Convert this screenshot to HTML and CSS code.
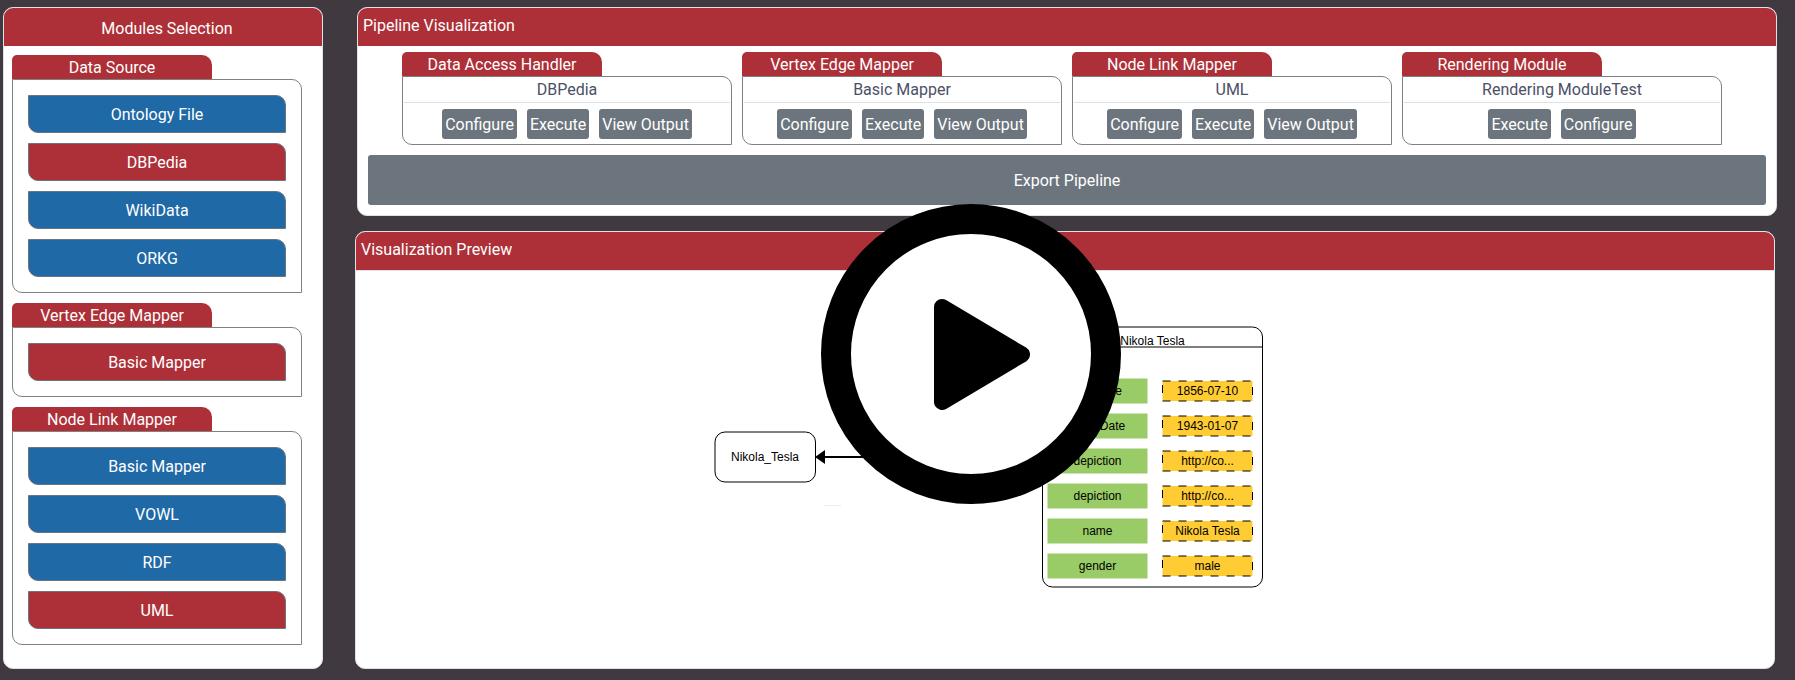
FILE: index.html
```html
<!DOCTYPE html>
<html lang="en">
<head>
<meta charset="utf-8">
<title>Visualization Pipeline</title>
<link rel="stylesheet" href="styles.css">
</head>
<body>
<div class="app">
  <aside class="panel modules">
    <h1 class="panel-header modules-title">Modules Selection</h1>
    <div class="module-groups">
      <section>
        <h2 class="tab">Data Source</h2>
        <div class="box module-list">
          <button class="module">Ontology File</button>
          <button class="module selected">DBPedia</button>
          <button class="module">WikiData</button>
          <button class="module">ORKG</button>
        </div>
      </section>
      <section>
        <h2 class="tab">Vertex Edge Mapper</h2>
        <div class="box module-list">
          <button class="module selected">Basic Mapper</button>
        </div>
      </section>
      <section>
        <h2 class="tab">Node Link Mapper</h2>
        <div class="box module-list">
          <button class="module">Basic Mapper</button>
          <button class="module">VOWL</button>
          <button class="module">RDF</button>
          <button class="module selected">UML</button>
        </div>
      </section>
    </div>
  </aside>

  <main class="content">
    <section class="panel pipeline">
      <h1 class="panel-header">Pipeline Visualization</h1>
      <div class="steps">
        <section class="step step-wide">
          <h2 class="tab">Data Access Handler</h2>
          <div class="box step-box">
            <div class="step-name">DBPedia</div>
            <div class="actions"><button class="action">Configure</button><button class="action">Execute</button><button class="action">View Output</button></div>
          </div>
        </section>
        <section class="step">
          <h2 class="tab">Vertex Edge Mapper</h2>
          <div class="box step-box">
            <div class="step-name">Basic Mapper</div>
            <div class="actions"><button class="action">Configure</button><button class="action">Execute</button><button class="action">View Output</button></div>
          </div>
        </section>
        <section class="step">
          <h2 class="tab">Node Link Mapper</h2>
          <div class="box step-box">
            <div class="step-name">UML</div>
            <div class="actions"><button class="action">Configure</button><button class="action">Execute</button><button class="action">View Output</button></div>
          </div>
        </section>
        <section class="step">
          <h2 class="tab">Rendering Module</h2>
          <div class="box step-box">
            <div class="step-name">Rendering ModuleTest</div>
            <div class="actions"><button class="action">Execute</button><button class="action">Configure</button></div>
          </div>
        </section>
      </div>
      <button class="export">Export Pipeline</button>
    </section>

    <section class="panel preview">
      <h1 class="panel-header">Visualization Preview</h1>
      <div class="canvas">
        <svg class="diagram" width="800" height="390" viewBox="665 271 800 390">
          <rect class="node" x="715" y="432" width="100.500" height="50" rx="10"/>
          <text x="765" y="461">Nikola_Tesla</text>
          <path class="edge" d="M824 457H1042"/>
          <path d="M815 457L825 450V464Z"/>
          <rect class="node" x="1042.5" y="327" width="220" height="260" rx="10"/>
          <path class="node" d="M1042.5 347H1262.5"/>
          <text x="1152.5" y="345">Nikola Tesla</text>
          <g class="keys">
            <rect x="1047.5" y="378.5" width="100" height="25"/>
            <rect x="1047.5" y="413.5" width="100" height="25"/>
            <rect x="1047.5" y="448.5" width="100" height="25"/>
            <rect x="1047.5" y="483.5" width="100" height="25"/>
            <rect x="1047.5" y="518.5" width="100" height="25"/>
            <rect x="1047.5" y="553.5" width="100" height="25"/>
          </g>
          <g class="values">
            <rect x="1162.5" y="381" width="90" height="20"/>
            <rect x="1162.5" y="416" width="90" height="20"/>
            <rect x="1162.5" y="451" width="90" height="20"/>
            <rect x="1162.5" y="486" width="90" height="20"/>
            <rect x="1162.5" y="521" width="90" height="20"/>
            <rect x="1162.5" y="556" width="90" height="20"/>
          </g>
          <text x="1097.5" y="395">birthDate</text><text x="1207.5" y="395">1856-07-10</text>
          <text x="1097.5" y="430">deathDate</text><text x="1207.5" y="430">1943-01-07</text>
          <text x="1097.5" y="465">depiction</text><text x="1207.5" y="465">http://co...</text>
          <text x="1097.5" y="500">depiction</text><text x="1207.5" y="500">http://co...</text>
          <text x="1097.5" y="535">name</text><text x="1207.5" y="535">Nikola Tesla</text>
          <text x="1097.5" y="570">gender</text><text x="1207.5" y="570">male</text>
          <path class="trace" d="M824 505.5H841"/>
        </svg>
      </div>
      <button class="play" aria-label="Play">
        <svg width="300" height="300" viewBox="0 0 300 300">
          <circle cx="150" cy="150" r="135" fill="#fff" stroke="#000" stroke-width="30"/>
          <path d="M121 103L201 150.500L121 198Z" stroke="#000" stroke-width="16" stroke-linejoin="round"/>
        </svg>
      </button>
    </section>
  </main>
</div>
</body>
</html>
```
FILE: styles.css
```css
* {
  box-sizing: border-box;
}

body {
  margin: 0;
  background: #403a40;
  font-family: Roboto, sans-serif;
  font-size: 16px;
  line-height: 24px;
}

h1,
h2 {
  margin: 0;
  font-size: 16px;
  font-weight: 400;
}

button {
  margin: 0;
  padding: 2px 0 0;
  border: 0;
  font: inherit;
  color: #fff;
  cursor: pointer;
}

.app {
  display: flex;
  gap: 32px;
  min-height: 100vh;
  padding: 7px 18px 11px 3px;
}

.panel {
  background: #fff;
  border: 1px solid #dee2e6;
  border-radius: 10px;
}

.panel-header {
  height: 38px;
  padding: 6px 5px 0;
  background: #ad2f37;
  border-radius: 9px 9px 0 0;
  color: #fff;
}

.modules {
  flex: none;
  width: 320px;
}

.modules-title {
  padding: 9px 0 0 8px;
  text-align: center;
}

.module-groups {
  display: flex;
  flex-direction: column;
  gap: 10px;
  padding: 9px 20px 23px 8px;
}

.tab {
  width: 200px;
  height: 24px;
  background: #ad2f37;
  border-radius: 5px 10px 0 0;
  color: #fff;
  line-height: 26px;
  text-align: center;
}

.box {
  border: 1px solid #808080;
  border-radius: 0 10px 0 10px;
}

.module-list {
  display: flex;
  flex-direction: column;
  gap: 10px;
  padding: 15px;
}

.module {
  height: 38px;
  background: #1f69a6;
  border: 1px solid #6c757d;
  border-radius: 0 10px 0 10px;
}

.selected {
  background: #ad2f37;
}

.content {
  display: flex;
  flex: 1;
  flex-direction: column;
  gap: 15px;
  min-width: 0;
}

.pipeline {
  display: flex;
  flex-direction: column;
  margin-left: 2px;
  padding-bottom: 10px;
}

.steps {
  display: flex;
  gap: 10px;
  padding: 6px 54px 10px 44px;
}

.step {
  flex: 320 1 0;
}

.step-wide {
  flex-grow: 330;
}

.step-box {
  padding: 0 1px 5px;
}

.step-name {
  height: 26px;
  border-bottom: 1px solid #dee2e6;
  color: #4b5066;
  line-height: 26px;
  text-align: center;
}

.actions {
  display: flex;
  justify-content: center;
  gap: 10px;
  padding-top: 6px;
}

.action {
  height: 30px;
  padding: 2px 3px 0;
  background: #6c757d;
  border-radius: 3px;
}

.export {
  height: 50px;
  margin: 0 10px;
  background: #6c757d;
  border-radius: 3px;
}

.preview {
  position: relative;
  flex: 1;
  margin-right: 2px;
}

.preview .panel-header {
  height: 39px;
  border-bottom: 1px solid #dee2e6;
}

.canvas {
  display: flex;
  justify-content: center;
}

.diagram {
  font-family: "Liberation Sans", Arial, sans-serif;
  font-size: 12px;
  text-anchor: middle;
}

.node {
  fill: none;
  stroke: #000;
}

.edge {
  stroke: #000;
  stroke-width: 2px;
}

.keys {
  fill: #9c6;
}

.values {
  fill: #fc3;
  stroke: #000;
  stroke-dasharray: 8 8;
}

.trace {
  stroke: #f3ece4;
}

.play {
  position: absolute;
  top: -28px;
  left: calc(50% - 244px);
  width: 300px;
  height: 300px;
  padding: 0;
  background: none;
  border-radius: 50%;
}

.play svg {
  display: block;
}
```
